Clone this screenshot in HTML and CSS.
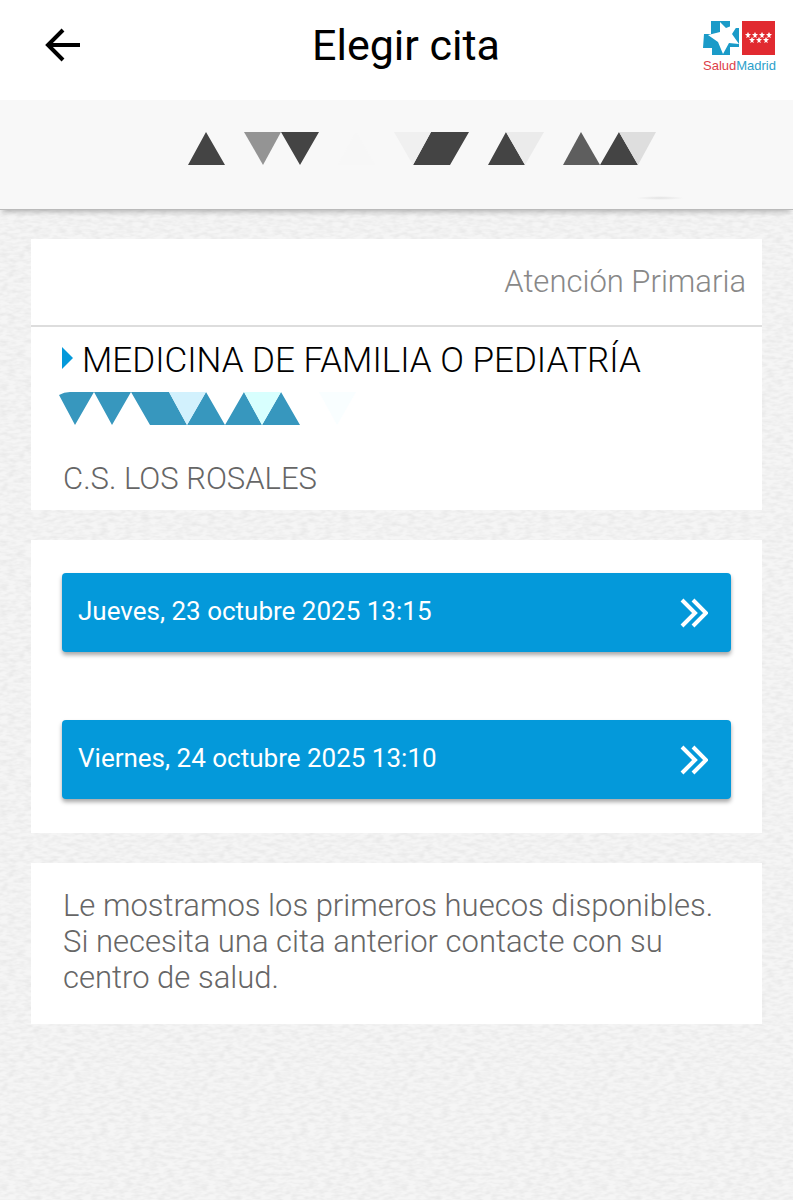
FILE: index.html
```html
<!DOCTYPE html>
<html lang="es">
<head>
<meta charset="utf-8">
<meta name="viewport" content="width=device-width, initial-scale=1">
<title>Elegir cita</title>
<link rel="stylesheet" href="styles.css">
</head>
<body>

<header class="topbar">
  <a class="back" href="#" aria-label="Volver">
    <svg width="38" height="36" viewBox="0 0 38 36"><path d="M19 3 L4 18 L19 33 M4 18 H36" fill="none" stroke="#000" stroke-width="4"/></svg>
  </a>
  <h1>Elegir cita</h1>
  <div class="logo">
    <svg width="73" height="36" viewBox="0 0 73 36">
      <path fill="#1b9bc8" d="M8 1H27V8H36V27H27V35H9V28H0L1 14H8Z"/>
      <path fill="#fff" d="M17 2L23 8L36 3L29 14L36 24L26 23L20 34L15 22L5 15L17 12Z"/>
      <rect x="39" y="1" width="33" height="34" fill="#e12a30"/>
      <g fill="#fff">
        <path id="star" d="M45 12l1 2h2l-2 2 1 2-2-1-2 1 1-2-2-2h2z"/>
        <use href="#star" x="7"/><use href="#star" x="14"/><use href="#star" x="21"/>
        <use href="#star" x="4" y="5"/><use href="#star" x="11" y="5"/><use href="#star" x="18" y="5"/>
      </g>
    </svg>
    <div class="logo-name"><span>Salud</span>Madrid</div>
  </div>
</header>

<div class="patient">
  <svg width="500" height="70" viewBox="187 131 500 70">
    <defs>
      <radialGradient id="smudge">
        <stop offset="0" stop-color="#e2e2e2"/>
        <stop offset="1" stop-color="#f8f8f8"/>
      </radialGradient>
    </defs>
    <path fill="#444" d="M188 165L206 132L225 165ZM281 132H319L300 165ZM413 165L431 132H469L450 165ZM488 165L506 132L525 165ZM600 165L619 132L638 165Z"/>
    <path fill="#949494" d="M244 132H281L263 165Z"/>
    <path fill="#f7f7f7" d="M338 165L356 132L375 165Z"/>
    <path fill="#f0f0f0" d="M394 132H431L413 165Z"/>
    <path fill="#ebebeb" d="M506 132H544L525 165Z"/>
    <path fill="#5e5e5e" d="M563 165L581 132L600 165Z"/>
    <path fill="#dedede" d="M619 132H656L638 165Z"/>
    <ellipse fill="url(#smudge)" cx="660" cy="198" rx="24" ry="2"/>
  </svg>
</div>

<main>
  <section class="card">
    <div class="card-type">Atención Primaria</div>
    <div class="card-info">
      <h2>MEDICINA DE FAMILIA O PEDIATRÍA</h2>
      <svg class="doctor" width="300" height="33" viewBox="59 392 300 33">
        <path fill="#3797be" d="M59 395Q64 392 70 392H94L75 425ZM94 392H131L112 425ZM131 392H169L187 425H150ZM187 425L206 392L225 425ZM225 425L244 392L262 425ZM262 425L281 392L300 425Z"/>
        <path fill="#d2f1fd" d="M169 392H206L187 425Z"/>
        <path fill="#d8fffe" d="M244 392H281L262 425Z"/>
        <path fill="#f9feff" d="M319 392H356L337 425Z"/>
      </svg>
      <p>C.S. LOS ROSALES</p>
    </div>
  </section>

  <section class="card slots">
    <button type="button" class="slot">
      <span>Jueves, 23 octubre 2025 13:15</span>
      <svg width="28" height="30" viewBox="0 0 28 30"><path d="M2 2L15 15L2 28M13 2L26 15L13 28" fill="none" stroke="#fff" stroke-width="4"/></svg>
    </button>
    <button type="button" class="slot">
      <span>Viernes, 24 octubre 2025 13:10</span>
      <svg width="28" height="30" viewBox="0 0 28 30"><path d="M2 2L15 15L2 28M13 2L26 15L13 28" fill="none" stroke="#fff" stroke-width="4"/></svg>
    </button>
  </section>

  <section class="card note">
    <p>Le mostramos los primeros huecos disponibles. Si necesita una cita anterior contacte con su centro de salud.</p>
  </section>
</main>

</body>
</html>
```
FILE: styles.css
```css
* {
  box-sizing: border-box;
}

body {
  margin: 0;
  min-height: 100vh;
  font-family: Roboto, sans-serif;
  color: #666;
  /* paper grain */
  background: #f5f5f5 url("data:image/svg+xml,%3Csvg xmlns='http://www.w3.org/2000/svg' width='200' height='200'%3E%3Cfilter id='n' x='0' y='0' width='1' height='1'%3E%3CfeTurbulence type='fractalNoise' baseFrequency='.12 .3' numOctaves='2' stitchTiles='stitch'/%3E%3CfeColorMatrix values='0 0 0 0 0 0 0 0 0 0 0 0 0 0 0 .1 0 0 0 -.035'/%3E%3C/filter%3E%3Crect width='200' height='200' filter='url(%23n)'/%3E%3C/svg%3E");
}

h1, h2, p {
  margin: 0;
}

.topbar {
  display: grid;
  grid-template-columns: 96px 1fr 80px;
  align-items: center;
  height: 100px;
  padding: 0 17px 10px 20px;
  background: #fff;
}

.back {
  display: flex;
  padding-left: 24px;
}

.topbar h1 {
  font-size: 43px;
  font-weight: 400;
  color: #000;
  text-align: center;
}

.logo {
  display: flex;
  flex-direction: column;
  align-items: flex-end;
  gap: 2px;
  padding-top: 4px;
}

.logo-name {
  font: 13px/16px "Liberation Sans", sans-serif;
  color: #2c9fcb;
}

.logo-name span {
  color: #dd4048;
}

.patient {
  display: flex;
  justify-content: center;
  height: 110px;
  padding: 31px 0 0 81px;
  background: #f8f8f8;
  border-bottom: 1px solid #bbb;
  box-shadow: 0 5px 5px -3px rgba(0, 0, 0, .25);
}

main {
  display: flex;
  flex-direction: column;
  gap: 30px;
  padding: 29px 31px;
}

.card {
  background: #fff;
  font-size: 31px;
  font-weight: 300;
  line-height: 36px;
}

.card-type {
  padding: 25px 16px;
  border-bottom: 2px solid #ddd;
  color: #888;
  text-align: right;
}

.card-info {
  padding: 14px 28px 13px;
}

.card-info h2 {
  display: flex;
  gap: 9px;
  padding-left: 3px;
  font-size: 35px;
  font-weight: 300;
  line-height: 40px;
  color: #000;
}

.card-info h2::before {
  content: "";
  align-self: flex-start;
  margin-top: 6px;
  border: solid transparent;
  border-width: 11px 0 11px 11px;
  border-left-color: #0499da;
}

.doctor {
  display: block;
  margin: 11px 0 36px;
}

.card-info p {
  padding-left: 4px;
}

.slots {
  display: flex;
  flex-direction: column;
  gap: 68px;
  padding: 33px 31px 34px;
}

.slot {
  display: flex;
  align-items: center;
  justify-content: space-between;
  height: 79px;
  padding: 0 23px 0 16px;
  border: 0;
  border-radius: 4px;
  background: #0499da;
  box-shadow: 0 3px 4px rgba(0, 0, 0, .35);
  color: #fff;
  font: 26px Roboto, sans-serif;
  cursor: pointer;
}

.slot span {
  padding-bottom: 4px;
}

.note {
  padding: 25px 32px 28px;
}
```
